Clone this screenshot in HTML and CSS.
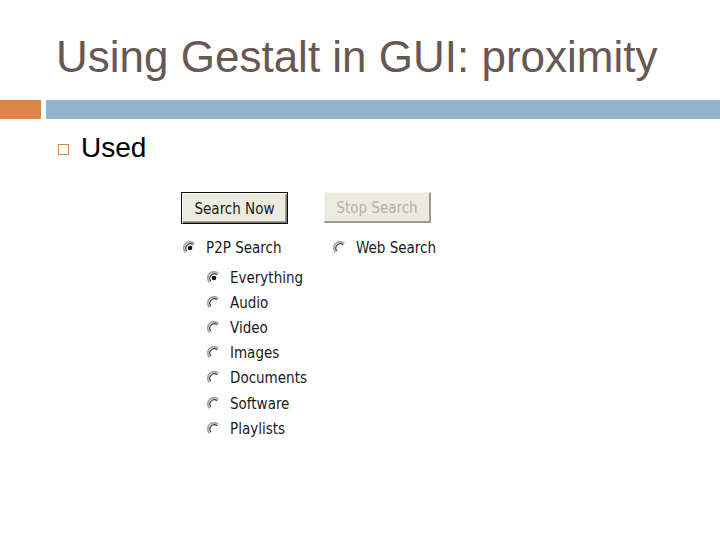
FILE: index.html
```html
<!DOCTYPE html>
<html>
<head>
<meta charset="utf-8">
<link rel="stylesheet" href="styles.css">
</head>
<body>
<div class="slide">
  <h1 class="title">Using Gestalt in GUI: proximity</h1>
  <div class="bars"><div class="bar-orange"></div><div class="bar-blue"></div></div>
  <div class="bullet-row"><span class="bullet"></span><span class="bullet-text">Used</span></div>
  <div class="shot">
    <div class="btn-row">
      <div class="btn btn-default">Search Now</div>
      <div class="btn btn-disabled">Stop Search</div>
    </div>
    <div class="mode-row">
      <div class="radio-item col-p2p">
        <svg class="radio" viewBox="0 0 14 14"><circle cx="7" cy="7" r="6" fill="#fff"/><path d="M2.6 11.4 A6.2 6.2 0 0 1 11.4 2.6" fill="none" stroke="#a8a8a8" stroke-width="1.8"/><path d="M3.9 10.1 A4.4 4.4 0 0 1 10.1 3.9" fill="none" stroke="#3c3c3c" stroke-width="1.1"/><circle cx="7" cy="7" r="2.3" fill="#111"/></svg>
        <span>P2P Search</span>
      </div>
      <div class="radio-item">
        <svg class="radio" viewBox="0 0 14 14"><circle cx="7" cy="7" r="6" fill="#fff"/><path d="M2.6 11.4 A6.2 6.2 0 0 1 11.4 2.6" fill="none" stroke="#a8a8a8" stroke-width="1.8"/><path d="M3.9 10.1 A4.4 4.4 0 0 1 10.1 3.9" fill="none" stroke="#3c3c3c" stroke-width="1.1"/></svg>
        <span>Web Search</span>
      </div>
    </div>
    <div class="sub-list">
      <div class="radio-item">
        <svg class="radio" viewBox="0 0 14 14"><circle cx="7" cy="7" r="6" fill="#fff"/><path d="M2.6 11.4 A6.2 6.2 0 0 1 11.4 2.6" fill="none" stroke="#a8a8a8" stroke-width="1.8"/><path d="M3.9 10.1 A4.4 4.4 0 0 1 10.1 3.9" fill="none" stroke="#3c3c3c" stroke-width="1.1"/><circle cx="7" cy="7" r="2.3" fill="#111"/></svg>
        <span>Everything</span>
      </div>
      <div class="radio-item">
        <svg class="radio" viewBox="0 0 14 14"><circle cx="7" cy="7" r="6" fill="#fff"/><path d="M2.6 11.4 A6.2 6.2 0 0 1 11.4 2.6" fill="none" stroke="#a8a8a8" stroke-width="1.8"/><path d="M3.9 10.1 A4.4 4.4 0 0 1 10.1 3.9" fill="none" stroke="#3c3c3c" stroke-width="1.1"/></svg>
        <span>Audio</span>
      </div>
      <div class="radio-item">
        <svg class="radio" viewBox="0 0 14 14"><circle cx="7" cy="7" r="6" fill="#fff"/><path d="M2.6 11.4 A6.2 6.2 0 0 1 11.4 2.6" fill="none" stroke="#a8a8a8" stroke-width="1.8"/><path d="M3.9 10.1 A4.4 4.4 0 0 1 10.1 3.9" fill="none" stroke="#3c3c3c" stroke-width="1.1"/></svg>
        <span>Video</span>
      </div>
      <div class="radio-item">
        <svg class="radio" viewBox="0 0 14 14"><circle cx="7" cy="7" r="6" fill="#fff"/><path d="M2.6 11.4 A6.2 6.2 0 0 1 11.4 2.6" fill="none" stroke="#a8a8a8" stroke-width="1.8"/><path d="M3.9 10.1 A4.4 4.4 0 0 1 10.1 3.9" fill="none" stroke="#3c3c3c" stroke-width="1.1"/></svg>
        <span>Images</span>
      </div>
      <div class="radio-item">
        <svg class="radio" viewBox="0 0 14 14"><circle cx="7" cy="7" r="6" fill="#fff"/><path d="M2.6 11.4 A6.2 6.2 0 0 1 11.4 2.6" fill="none" stroke="#a8a8a8" stroke-width="1.8"/><path d="M3.9 10.1 A4.4 4.4 0 0 1 10.1 3.9" fill="none" stroke="#3c3c3c" stroke-width="1.1"/></svg>
        <span>Documents</span>
      </div>
      <div class="radio-item">
        <svg class="radio" viewBox="0 0 14 14"><circle cx="7" cy="7" r="6" fill="#fff"/><path d="M2.6 11.4 A6.2 6.2 0 0 1 11.4 2.6" fill="none" stroke="#a8a8a8" stroke-width="1.8"/><path d="M3.9 10.1 A4.4 4.4 0 0 1 10.1 3.9" fill="none" stroke="#3c3c3c" stroke-width="1.1"/></svg>
        <span>Software</span>
      </div>
      <div class="radio-item">
        <svg class="radio" viewBox="0 0 14 14"><circle cx="7" cy="7" r="6" fill="#fff"/><path d="M2.6 11.4 A6.2 6.2 0 0 1 11.4 2.6" fill="none" stroke="#a8a8a8" stroke-width="1.8"/><path d="M3.9 10.1 A4.4 4.4 0 0 1 10.1 3.9" fill="none" stroke="#3c3c3c" stroke-width="1.1"/></svg>
        <span>Playlists</span>
      </div>
    </div>
  </div>
</div>
</body>
</html>
```

FILE: styles.css
```css
html, body {
  margin: 0;
  padding: 0;
  background: #fff;
}
.slide {
  width: 720px;
  height: 540px;
  overflow: hidden;
  display: flex;
  flex-direction: column;
  font-family: "Liberation Sans", Arial, sans-serif;
}
.title {
  margin: 0;
  padding: 35px 0 0 56px;
  font-size: 44px;
  line-height: 44px;
  font-weight: normal;
  color: #685853;
}
.bars {
  margin-top: 21px;
  display: flex;
  gap: 5px;
  height: 19px;
}
.bar-orange {
  width: 41px;
  background: #de8449;
}
.bar-blue {
  flex: 1;
  background: #93b3cf;
}
.bullet-row {
  margin-top: 13px;
  display: flex;
  align-items: center;
  height: 32px;
  padding-left: 58px;
}
.bullet {
  width: 9px;
  height: 9px;
  border: 1.5px solid #cf8a5a;
  margin-right: 12px;
  margin-top: 3px;
}
.bullet-text {
  font-size: 28px;
  line-height: 32px;
  color: #000;
}
.shot {
  margin-top: 28px;
  margin-left: 181px;
  font-family: "DejaVu Sans Condensed", "DejaVu Sans", sans-serif;
  font-size: 15px;
  color: #1a1a1a;
}
.btn-row {
  display: flex;
  gap: 36px;
}
.btn {
  width: 107px;
  height: 32px;
  box-sizing: border-box;
  display: flex;
  align-items: center;
  justify-content: center;
  padding-top: 2px;
  background: #ecebe0;
}
.btn-default {
  border: 1px solid #111;
  box-shadow: inset 1px 1px 0 #fff, inset -1px -1px 0 #6e6d66, inset -2px -2px 0 #aca899;
}
.btn-disabled {
  color: #b4b2a6;
  border-top: 1px solid #f6f5ee;
  border-left: 1px solid #f6f5ee;
  border-right: 2px solid #9c9a90;
  border-bottom: 2px solid #9c9a90;
  height: 31px;
}
.mode-row {
  margin-top: 11px;
  display: flex;
  padding-left: 2px;
}
.col-p2p {
  width: 150px;
}
.radio-item {
  display: flex;
  align-items: center;
  height: 25px;
}
.radio {
  width: 14px;
  height: 14px;
  margin-right: 9px;
  flex: none;
}
.sub-list {
  margin-top: 5px;
  padding-left: 26px;
  display: flex;
  flex-direction: column;
}
.sub-list .radio-item {
  height: 25.2px;
}
```
